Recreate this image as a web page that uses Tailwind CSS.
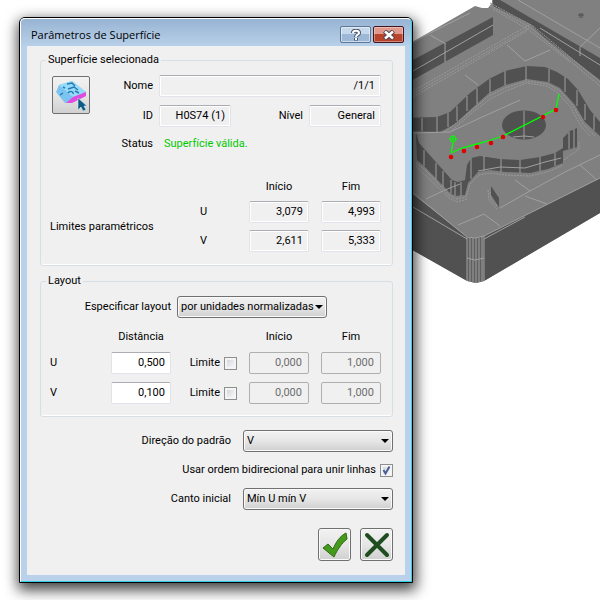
<!DOCTYPE html>
<html lang="pt-BR">
<head>
    <meta charset="UTF-8">
    <meta name="viewport" content="width=device-width, initial-scale=1.0">
    <title>Parâmetros de Superfície</title>
    <script src="https://cdn.jsdelivr.net/npm/@tailwindcss/browser@4"></script>
</head>
<body class="relative min-h-screen overflow-hidden bg-white font-[Roboto,sans-serif] text-[11px] leading-[14px] text-black">

    <!-- Peça 3D atrás da janela -->
    <svg class="absolute top-0 left-[400px] w-[200px] h-[300px]" viewBox="400 0 200 300" fill="none" aria-hidden="true">
        <path fill="#808080" d="M400 49 475 6 482 8 488 8 492 3V0H600V213L484 281 476 283 468 281 400 243Z"/>
        <!-- paredes -->
        <g fill="#515151">
            <path d="M400 67 493 17V35L400 87Z"/>
            <path d="M493 0H500L600 58V80L570 57 545 38 530 24 493 6Z"/>
            <path d="M400 118 437 117 450 112 470 93 489 79 505 71 527 66 545 67 557 72 568 79 578 90 590 110 600 122V136L585 122 575 105 560 88 548 82 527 79 505 85 489 93 470 110 455 124 440 132 400 131Z"/>
            <ellipse cx="524" cy="125" rx="22" ry="14.500"/>
            <path d="M416 133 419 143 452 180 458 182 465 180 467 165 471 158 480 156 500 159 520 160 540 157 555 153 563 148V138L570 131 577 128V147L563 151V163L548 169 530 173 505 172 490 170 478 172 468 183 465 195 455 196 449 192 425 167 417 160Z"/>
            <path d="M491 186 499 198V207L491 195Z"/>
            <path d="M400 184 467 237V281L400 243Z"/>
            <path d="M484 236 600 178V213L484 281Z"/>
        </g>
        <path fill="#5f5f5f" d="M467 236 475 238 484 236V281L476 283 467 281Z"/>
        <!-- raios de concordância -->
        <g stroke="#9a9a9a" stroke-width="1" stroke-dasharray="2 1">
            <path d="M490 3 533 26 600 82M491 6 531 28 600 86M493 9 529 30 570 62"/>
            <path d="M413 91 529 25M413 94 529 28M413 97 527 31"/>
            <path d="M445 132 470 112 489 96 505 88 527 81 548 84 560 91 573 106 583 124 595 136M450 132 472 113 490 99 506 91 527 83 547 86 558 93 571 108 580 125 590 136"/>
            <path d="M416 163 425 170 449 195 456 199 466 197 470 184 479 175 490 173 505 175 530 176 550 171 563 165M416 166 449 198 457 202 468 199"/>
            <path d="M564 160 579 149V142M488 190 489 200 497 209M490 192 491 199 497 206"/>
        </g>
        <!-- linhas de superfície -->
        <g stroke="#a0a0a0" stroke-width="1">
            <path d="M413 71 493 25M445 44V62M413 43 422 37 470 13M430 35 446 44M580 56V47L600 28M518 0 600 48M507 45 525 61 550 50"/>
            <path d="M422 118V131M437 117V132M448 113V127M457 106V121M467 96V111M477 88V104M490 79V93M505 71V85M526 66V80M549 69V82M565 77V92M577 90V106M585 104V120M594 115V130"/>
            <path d="M413 133 450 132 480 118 520 100M524 111V139M513 137 524 136 534 137M465 75 478 85M540 28 600 65"/>
            <path d="M424 150V166M436 163V179M443 171V187M451 180V193M455 182V196M461 182V196M471 158V179M484 156V171M501 159V172M520 160V173M540 157V171M555 153V166M569 132V149M574 129V148"/>
            <path d="M478 171 500 167 525 168 545 162 561 158M525 196 547 204M500 208 530 191 565 172 600 155M530 191 515 180M580 165 597 180M426 199 445 190 460 184M458 225 484 214 500 226"/>
            <path d="M413 193 467 237 475 238 484 236 600 178M413 207 467 239M484 239 525 217M467 258 475 260 484 258"/>
            <path d="M467 237V281M470 237V282M473 238V283M476 238V283M479 238V282M482 237V282M484 236V281"/>
            <path stroke="#505050" d="M580 13V18M578 15H584M582 13V18"/>
        </g>
        <!-- trajetória da ferramenta -->
        <path stroke="#00ff00" stroke-width="1.300" d="M451 153 453 143M451 153 462 148 477 144 491 140 503 136 556 109 559 94"/>
        <circle cx="453" cy="139" r="3" stroke="#00ff00"/>
        <path stroke="#00ff00" d="M449 139H457M453 135V143"/>
        <g fill="#e00000">
            <circle cx="451" cy="157" r="2.300"/><circle cx="464" cy="151" r="2.300"/><circle cx="477" cy="147" r="2.300"/>
            <circle cx="491" cy="143" r="2.300"/><circle cx="503" cy="137" r="2.300"/><circle cx="543" cy="117" r="2.300"/><circle cx="556" cy="110" r="2.300"/>
        </g>
    </svg>

    <!-- Janela -->
    <main class="relative mt-[17px] ml-[19px] w-full max-w-[394px] rounded-t-md border border-black bg-[#b9d1ea] shadow-[1px_5px_14px_2px_rgba(0,0,0,0.75)]">
        <div class="rounded-t-[5px] border-t border-l border-r border-b border-t-white border-l-white border-r-[#35cfe8] border-b-[#35cfe8] bg-linear-to-b from-[#98b4d3] to-[#b9d1ea] to-[28px] px-[6px] pb-[6px]">
            <header class="flex h-[27px] items-start justify-between pr-[1px] pl-1">
                <h1 class="pt-[8px] font-['Open_Sans',sans-serif] text-[11px] leading-[16px]">Parâmetros de Superfície</h1>
                <div class="flex gap-[2px] pt-[7px]">
                    <button type="button" aria-label="Ajuda" class="flex h-[17px] w-[31px] items-center justify-center rounded-[2px] border border-[#5c7796] bg-linear-to-b from-[#c6d8eb] from-50% to-[#9db8d6] to-50% shadow-[inset_0_0_0_1px_rgba(255,255,255,0.5)]">
                        <svg class="h-[12px] w-[10px]" viewBox="0 0 10 12" fill="none"><path stroke="#45536a" stroke-width="4" d="M2 4C2 1 8 1 8 4 8 6 5 5.500 5 8M5 9V11.500"/><path stroke="#fff" stroke-width="2" d="M2 4C2 1 8 1 8 4 8 6 5 5.500 5 8M5 9V11"/></svg>
                    </button>
                    <button type="button" aria-label="Fechar" class="flex h-[17px] w-[31px] items-center justify-center rounded-[2px] border border-[#431422] bg-linear-to-b from-[#e0998c] from-50% to-[#b8442c] to-50% shadow-[inset_0_0_0_1px_rgba(255,255,255,0.35)]">
                        <svg class="h-[10px] w-[12px]" viewBox="0 0 12 10" fill="none"><path stroke="#4d4650" stroke-width="4.500" d="M1.500 1 10.500 9M10.500 1 1.500 9"/><path stroke="#fff" stroke-width="2.500" d="M2 1.500 10 8.500M10 1.500 2 8.500"/></svg>
                    </button>
                </div>
            </header>

            <form class="bg-[#f0f0f0] pt-[7px] pr-3 pb-[14px] pl-[13px]">
                <!-- Superfície selecionada -->
                <fieldset class="rounded-[3px] border border-[#d5dfe5] pr-[11px] pb-[13px] pl-[11px] shadow-[inset_0_-1px_0_white]">
                    <legend class="-ml-[6px] px-[2px]">Superfície selecionada</legend>
                    <div class="grid grid-cols-[38px_57px_72px_1fr_72px] gap-x-[6px] gap-y-2 pt-2">
                        <button type="button" aria-label="Selecionar superfície" class="row-span-2 mt-px flex size-[38px] items-center justify-center rounded-[2px] border border-[#707070] bg-linear-to-b from-[#f2f2f2] via-[#e6e6e6] to-[#d0d0d0]">
                            <svg class="size-[32px]" viewBox="0 0 32 32">
                                <path fill="#7cc4f0" d="M1 13 4 6 17 2 31 13 29 18 14 24 10 24Z"/>
                                <path fill="#96dcfa" d="M4 6 17 2 31 13 18 18Z"/>
                                <path fill="#e04be0" d="M31 13V17L17 24 11 24 18 18Z"/>
                                <path fill="none" stroke="#2a78b4" stroke-width="1.500" d="M12 5 17 4 20 7M13 10 19 8 23 11M13 14C15 11 19 13 18 15M5 16 8 14M8 8 10 9M20 12 24 14"/>
                                <path fill="#0d5c85" stroke="#e8f4fa" stroke-width="0.500" d="M23 19V31L26 28 28 32 31 31 29 27H32Z"/>
                            </svg>
                        </button>
                        <label for="nome" class="self-center text-right">Nome</label>
                        <input id="nome" value="/1/1" readonly class="col-span-3 h-[22px] w-full min-w-0 rounded-[2px] border border-[#e2e3ea] border-t-[#abadb3] pr-[5px] pb-[2px] text-right shadow-[inset_0_0_0_1px_white]">
                        <label for="id" class="self-center text-right">ID</label>
                        <input id="id" value="H0S74 (1)" readonly class="h-[22px] w-full min-w-0 rounded-[2px] border border-[#e2e3ea] border-t-[#abadb3] pr-[5px] pb-[2px] text-right shadow-[inset_0_0_0_1px_white]">
                        <label for="nivel" class="self-center text-right">Nível</label>
                        <input id="nivel" value="General" readonly class="h-[22px] w-full min-w-0 rounded-[2px] border border-[#e2e3ea] border-t-[#abadb3] pr-[5px] pb-[2px] text-right shadow-[inset_0_0_0_1px_white]">
                        <span class="col-start-2 text-right leading-[18px]">Status</span>
                        <output class="col-span-3 pl-[5px] leading-[18px] text-[#00c800]">Superfície válida.</output>
                    </div>

                    <div class="-ml-[2px] mt-[27px] grid grid-cols-[1fr_49px_60px_60px] items-center gap-x-3 gap-y-[7px]">
                        <span class="col-start-3 text-center">Início</span>
                        <span class="text-center">Fim</span>
                        <span class="row-span-2">Limites paramétricos</span>
                        <span class="pl-3">U</span>
                        <input aria-label="U início" value="3,079" readonly class="h-[22px] w-full min-w-0 rounded-[2px] border border-[#e2e3ea] border-t-[#abadb3] pr-[5px] pb-[2px] text-right shadow-[inset_0_0_0_1px_white]">
                        <input aria-label="U fim" value="4,993" readonly class="h-[22px] w-full min-w-0 rounded-[2px] border border-[#e2e3ea] border-t-[#abadb3] pr-[5px] pb-[2px] text-right shadow-[inset_0_0_0_1px_white]">
                        <span class="pl-3">V</span>
                        <input aria-label="V início" value="2,611" readonly class="h-[22px] w-full min-w-0 rounded-[2px] border border-[#e2e3ea] border-t-[#abadb3] pr-[5px] pb-[2px] text-right shadow-[inset_0_0_0_1px_white]">
                        <input aria-label="V fim" value="5,333" readonly class="h-[22px] w-full min-w-0 rounded-[2px] border border-[#e2e3ea] border-t-[#abadb3] pr-[5px] pb-[2px] text-right shadow-[inset_0_0_0_1px_white]">
                    </div>
                </fieldset>

                <!-- Layout -->
                <fieldset class="mt-2 rounded-[3px] border border-[#d5dfe5] pr-[11px] pb-3 pl-[9px] shadow-[inset_0_-1px_0_white]">
                    <legend class="-ml-1 px-[2px]">Layout</legend>
                    <div class="grid grid-cols-[121px_150px] items-center gap-[6px] pt-2">
                        <label for="layout" class="text-right">Especificar layout</label>
                        <div class="relative">
                            <select id="layout" class="block h-[22px] w-full appearance-none rounded-[3px] border border-[#707070] bg-linear-to-b from-[#f2f2f2] via-[#e6e6e6] to-[#d0d0d0] pl-[3px] shadow-[inset_0_0_0_1px_#fafafa]">
                                <option>por unidades normalizadas</option>
                            </select>
                            <svg class="pointer-events-none absolute top-[9px] right-1 h-[4px] w-[8px]" viewBox="0 0 8 4"><path d="M0 0H8L4 4Z"/></svg>
                        </div>
                    </div>

                    <div class="mt-3 grid grid-cols-[1fr_60px_54px_60px_60px] items-center gap-x-3 gap-y-2">
                        <span class="col-start-2 text-center">Distância</span>
                        <span class="col-start-4 text-center">Início</span>
                        <span class="text-center">Fim</span>

                        <label for="du">U</label>
                        <input id="du" value="0,500" class="h-[22px] w-full min-w-0 rounded-[2px] border border-[#e2e3ea] border-t-[#abadb3] bg-white pr-[5px] pb-[2px] text-right">
                        <label class="flex items-center justify-end gap-1">Limite <input type="checkbox" class="size-[13px] appearance-none border border-[#8e8f8f] bg-linear-to-br from-[#cbcfd5] to-white shadow-[inset_0_0_0_2px_#f4f4f4]"></label>
                        <input aria-label="U início" value="0,000" disabled class="h-[22px] w-full min-w-0 rounded-[2px] border border-[#afafaf] pr-[6px] pb-[2px] text-right text-[#6d6d6d]">
                        <input aria-label="U fim" value="1,000" disabled class="h-[22px] w-full min-w-0 rounded-[2px] border border-[#afafaf] pr-[6px] pb-[2px] text-right text-[#6d6d6d]">

                        <label for="dv">V</label>
                        <input id="dv" value="0,100" class="h-[22px] w-full min-w-0 rounded-[2px] border border-[#e2e3ea] border-t-[#abadb3] bg-white pr-[5px] pb-[2px] text-right">
                        <label class="flex items-center justify-end gap-1">Limite <input type="checkbox" class="size-[13px] appearance-none border border-[#8e8f8f] bg-linear-to-br from-[#cbcfd5] to-white shadow-[inset_0_0_0_2px_#f4f4f4]"></label>
                        <input aria-label="V início" value="0,000" disabled class="h-[22px] w-full min-w-0 rounded-[2px] border border-[#afafaf] pr-[6px] pb-[2px] text-right text-[#6d6d6d]">
                        <input aria-label="V fim" value="1,000" disabled class="h-[22px] w-full min-w-0 rounded-[2px] border border-[#afafaf] pr-[6px] pb-[2px] text-right text-[#6d6d6d]">
                    </div>
                </fieldset>

                <!-- Opções do padrão -->
                <div class="mt-[13px] grid grid-cols-[1fr_150px] items-center gap-x-3 gap-y-[7px]">
                    <label for="direcao" class="text-right">Direção do padrão</label>
                    <div class="relative">
                        <select id="direcao" class="block h-[22px] w-full appearance-none rounded-[3px] border border-[#707070] bg-linear-to-b from-[#f2f2f2] via-[#e6e6e6] to-[#d0d0d0] pl-[3px] shadow-[inset_0_0_0_1px_#fafafa]">
                            <option>V</option>
                        </select>
                        <svg class="pointer-events-none absolute top-[9px] right-1 h-[4px] w-[8px]" viewBox="0 0 8 4"><path d="M0 0H8L4 4Z"/></svg>
                    </div>
                    <label class="col-span-2 flex h-[22px] items-center justify-end gap-1">Usar ordem bidirecional para unir linhas
                        <span class="relative size-[13px]">
                            <input type="checkbox" checked class="block size-[13px] appearance-none border border-[#8e8f8f] bg-linear-to-br from-[#cbcfd5] to-white shadow-[inset_0_0_0_2px_#f4f4f4]">
                            <svg class="pointer-events-none absolute inset-0 size-[13px]" viewBox="0 0 13 13" fill="none"><path stroke="#4b5f97" stroke-width="2" d="M3.500 6 5.500 9.500 9.500 2.500"/></svg>
                        </span>
                    </label>
                    <label for="canto" class="text-right">Canto inicial</label>
                    <div class="relative">
                        <select id="canto" class="block h-[22px] w-full appearance-none rounded-[3px] border border-[#707070] bg-linear-to-b from-[#f2f2f2] via-[#e6e6e6] to-[#d0d0d0] pl-[3px] shadow-[inset_0_0_0_1px_#fafafa]">
                            <option>Mín U mín V</option>
                        </select>
                        <svg class="pointer-events-none absolute top-[9px] right-1 h-[4px] w-[8px]" viewBox="0 0 8 4"><path d="M0 0H8L4 4Z"/></svg>
                    </div>
                </div>

                <div class="mt-[18px] flex justify-end gap-[9px]">
                    <button type="submit" aria-label="OK" class="flex size-[33px] items-center justify-center rounded-[3px] border border-[#707070] bg-linear-to-b from-[#f2f2f2] via-[#e6e6e6] to-[#d0d0d0] shadow-[inset_0_0_0_1px_#fafafa]">
                        <svg class="size-[26px]" viewBox="0 0 26 26"><path fill="#459a1c" stroke="#2b6b14" d="M1 16 6 12 11 17C14 10 18 4 24 1L25 7C20 11 15 18 12 25Z"/></svg>
                    </button>
                    <button type="button" aria-label="Cancelar" class="flex size-[33px] items-center justify-center rounded-[3px] border border-[#707070] bg-linear-to-b from-[#f2f2f2] via-[#e6e6e6] to-[#d0d0d0] shadow-[inset_0_0_0_1px_#fafafa]">
                        <svg class="size-[26px]" viewBox="0 0 26 26" fill="none"><path stroke="#1f4d1f" stroke-width="4" stroke-linecap="round" d="M3 3 23 23M23 3 3 23"/></svg>
                    </button>
                </div>
            </form>
        </div>
    </main>
</body>
</html>
